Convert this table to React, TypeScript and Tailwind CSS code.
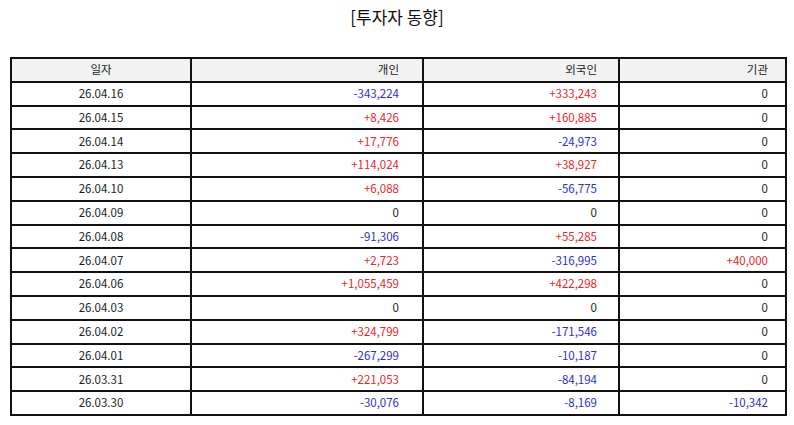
const rows: [string, string, string, string][] = [
  ["26.04.16", "-343,224", "+333,243", "0"],
  ["26.04.15", "+8,426", "+160,885", "0"],
  ["26.04.14", "+17,776", "-24,973", "0"],
  ["26.04.13", "+114,024", "+38,927", "0"],
  ["26.04.10", "+6,088", "-56,775", "0"],
  ["26.04.09", "0", "0", "0"],
  ["26.04.08", "-91,306", "+55,285", "0"],
  ["26.04.07", "+2,723", "-316,995", "+40,000"],
  ["26.04.06", "+1,055,459", "+422,298", "0"],
  ["26.04.03", "0", "0", "0"],
  ["26.04.02", "+324,799", "-171,546", "0"],
  ["26.04.01", "-267,299", "-10,187", "0"],
  ["26.03.31", "+221,053", "-84,194", "0"],
  ["26.03.30", "-30,076", "-8,169", "-10,342"],
];

function tone(v: string) {
  if (v.startsWith("+")) return "text-[#e8262c]";
  if (v.startsWith("-")) return "text-[#2e2ecf]";
  return "text-[#222]";
}

export default function App() {
  return (
    <div className="w-[794px] h-[425px] bg-white font-['Noto_Sans_CJK_KR','Noto_Sans',sans-serif] text-[#222]">
      <h1 className="pt-[5px] h-[57px] text-center text-[17px] leading-[24px] text-[#111]">[투자자 동향]</h1>
      <div className="pl-[10px]">
        <table className="w-[775px] border-collapse table-fixed text-[11.5px]">
          <colgroup>
            <col className="w-[180px]" />
            <col className="w-[232px]" />
            <col className="w-[196px]" />
            <col className="w-[167px]" />
          </colgroup>
          <thead>
            <tr className="h-[23.8px] bg-[#f2f2f2]">
              <th className="border-2 border-[#111] font-normal text-center">일자</th>
              <th className="border-2 border-[#111] font-normal text-right pr-[23px]">개인</th>
              <th className="border-2 border-[#111] font-normal text-right pr-[21px]">외국인</th>
              <th className="border-2 border-[#111] font-normal text-right pr-[17px]">기관</th>
            </tr>
          </thead>
          <tbody>
            {rows.map((r) => (
              <tr key={r[0]} className="h-[23.8px]">
                <td className="border-2 border-[#111] text-center">{r[0]}</td>
                <td className={`border-2 border-[#111] text-right pr-[23px] ${tone(r[1])}`}>{r[1]}</td>
                <td className={`border-2 border-[#111] text-right pr-[21px] ${tone(r[2])}`}>{r[2]}</td>
                <td className={`border-2 border-[#111] text-right pr-[17px] ${tone(r[3])}`}>{r[3]}</td>
              </tr>
            ))}
          </tbody>
        </table>
      </div>
    </div>
  );
}
